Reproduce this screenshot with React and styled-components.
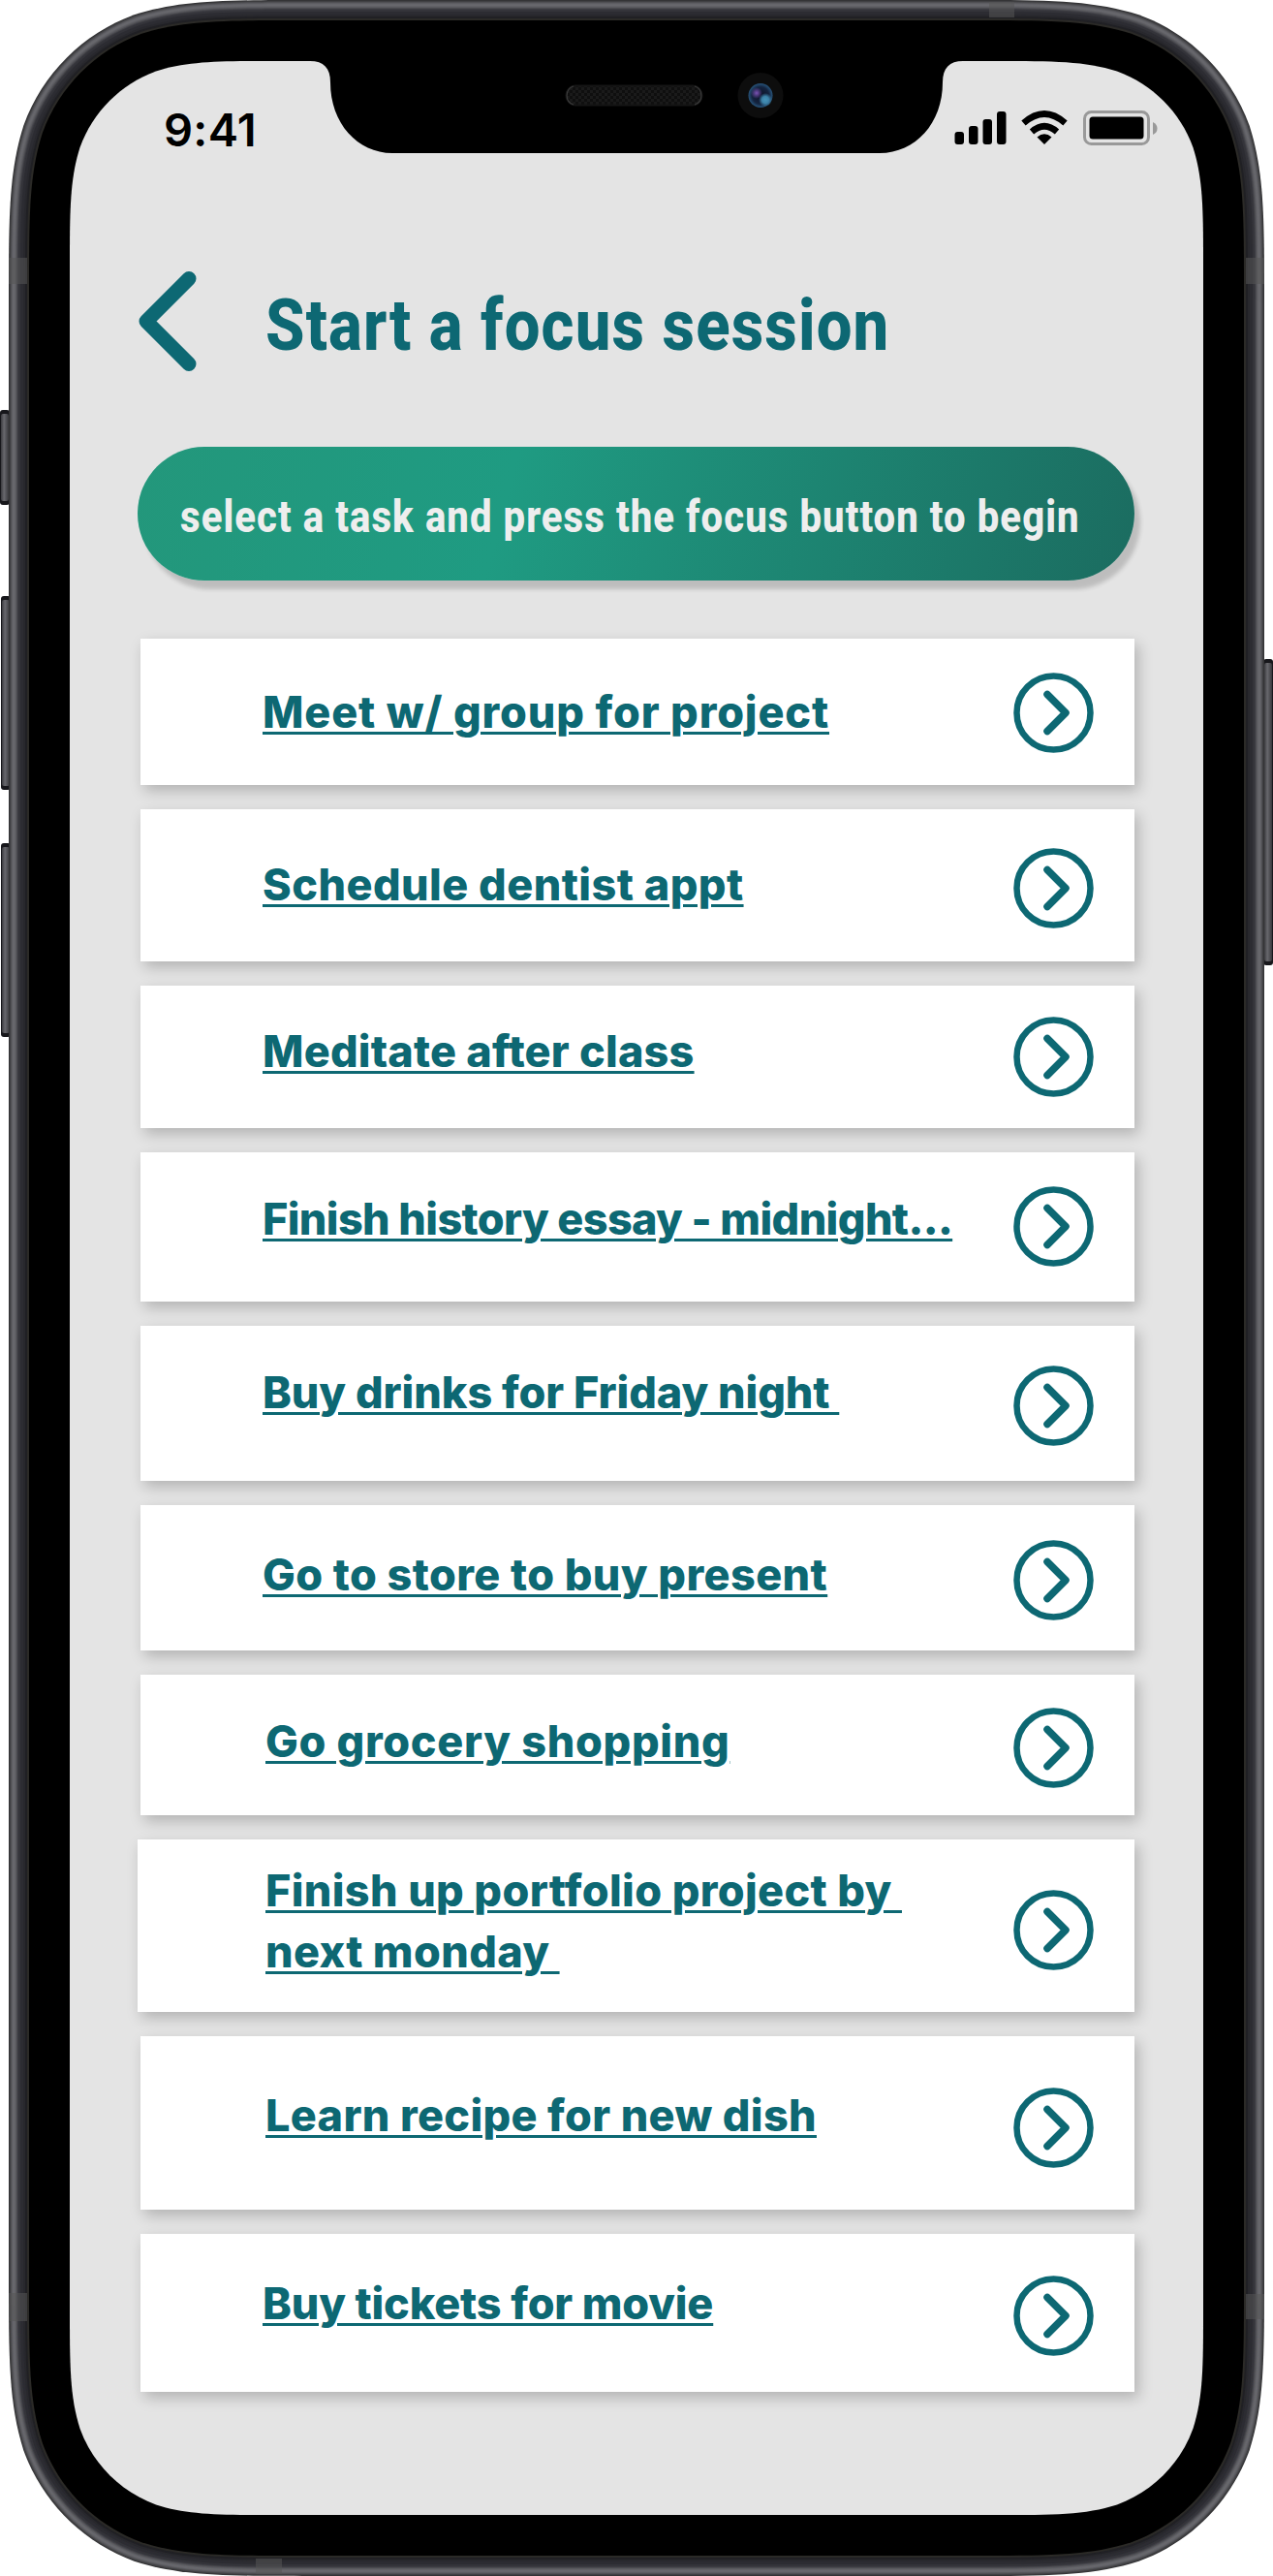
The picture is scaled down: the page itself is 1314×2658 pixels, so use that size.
import React from 'react';
import styled, { createGlobalStyle } from 'styled-components';

const GlobalStyle = createGlobalStyle`
  * {
    box-sizing: border-box;
  }

  body {
    margin: 0;
    background: #fff;
  }
`;

const Phone = styled.div`
  position: relative;
  width: 1314px;
  height: 2658px;
  overflow: hidden;
`;

const Shell = styled.svg`
  position: absolute;
  top: 0;
  left: 0;
`;

const Screen = styled.div`
  position: relative;
  margin: 0 72px;
  padding-top: 63px;
  color: #0d6873;
`;

const StatusBar = styled.div`
  display: flex;
  justify-content: space-between;
  height: 217px;
  padding: 47px 46px 0 97px;
`;

const Time = styled.span`
  font: 600 47px/48px Inter, sans-serif;
  letter-spacing: 0.3px;
  color: #000;
`;

const StatusIcons = styled.svg`
  margin-top: 2px;
`;

const Header = styled.header`
  display: flex;
  align-items: center;
  height: 104px;
  padding-left: 71px;
`;

const Title = styled.h1`
  margin: 6px 0 0 71px;
  font: 800 75px/1 Roboto, sans-serif;
  letter-spacing: 1.3px;
  white-space: nowrap;
  transform: scaleX(0.87);
  transform-origin: left;
`;

const Banner = styled.div`
  display: flex;
  align-items: center;
  width: 1029px;
  height: 138px;
  margin: 77px 0 60px 70px;
  padding: 5px 0 0 44px;
  border-radius: 69px;
  background: linear-gradient(105deg, #23977b 0%, #1f9b82 37%, #1b6c60 100%);
  box-shadow: 6px 9px 4px rgba(0, 0, 0, 0.17);
`;

const BannerText = styled.p`
  margin: 0;
  font: 800 46px/1 Roboto, sans-serif;
  letter-spacing: 1.25px;
  white-space: nowrap;
  color: #eee;
  transform: scaleX(0.87);
  transform-origin: left;
`;

const TaskList = styled.ul`
  display: flex;
  flex-direction: column;
  gap: 25px;
  margin: 0;
  padding: 0 71px 0 73px;
  list-style: none;
`;

const Task = styled.li`
  display: flex;
  justify-content: space-between;
  height: ${({ $height }) => $height}px;
  margin-left: ${({ $wide }) => ($wide ? -3 : 0)}px;
  padding: 0 42px 0 ${({ $indent }) => $indent}px;
  background: #fff;
  box-shadow: 4px 6px 14px rgba(0, 0, 0, 0.22);
`;

const TaskLink = styled.a`
  margin-top: ${({ $top }) => $top}px;
  font: 800 45px/63px Inter, sans-serif;
  letter-spacing: ${({ $tracking }) => $tracking}px;
  white-space: pre;
  text-decoration: underline 3px;
  text-underline-offset: 4px;
`;

const GoIcon = styled.svg`
  flex: none;
  margin-top: ${({ $top }) => $top}px;
`;

const tasks = [
  { label: 'Meet w/ group for project', height: 150.5, textTop: 43.5, iconTop: 35, tracking: 0.85 },
  { label: 'Schedule dentist appt', height: 157.3, textTop: 46.5, iconTop: 40, tracking: 0.45 },
  { label: 'Meditate after class', height: 147.2, textTop: 36.5, iconTop: 32, tracking: 0.2 },
  { label: 'Finish history essay - midnight...', height: 154, textTop: 37, iconTop: 35.5, tracking: -0.62 },
  { label: 'Buy drinks for Friday night ', height: 160, textTop: 36.6, iconTop: 41.2, tracking: -0.06 },
  { label: 'Go to store to buy present', height: 150, textTop: 39.6, iconTop: 36.5, tracking: 0.42 },
  { label: 'Go grocery shopping', height: 145, textTop: 37, iconTop: 34.2, indent: 129, tracking: 0.67 },
  {
    label: 'Finish up portfolio project by \nnext monday ',
    height: 178.5,
    textTop: 21,
    iconTop: 52.2,
    indent: 132,
    tracking: 0.36,
    wide: true,
  },
  { label: 'Learn recipe for new dish', height: 178.5, textTop: 49.6, iconTop: 52.4, indent: 129, tracking: 0.34 },
  { label: 'Buy tickets for movie', height: 163.4, textTop: 40.4, iconTop: 43.5, tracking: -0.16 },
];

// Path of a rounded rectangle with continuous-curvature corners
const roundedPath = (x, y, w, h, r) => {
  const corners = [
    [x, y, 0, 1, 1, 0],
    [x + w, y, -1, 0, 0, 1],
    [x + w, y + h, 0, -1, -1, 0],
    [x, y + h, 1, 0, 0, -1],
  ];
  const parts = corners.map(([cx, cy, ax, ay, bx, by], i) => {
    const p = (a, b) => `${(cx + (a * ax + b * bx) * r).toFixed(2)} ${(cy + (a * ay + b * by) * r).toFixed(2)}`;
    return `${i ? 'L' : 'M'}${p(1.5287, 0)}
      C${p(1.0885, 0)} ${p(0.8684, 0)} ${p(0.6315, 0.0749)}
      C${p(0.3728, 0.1691)} ${p(0.1691, 0.3728)} ${p(0.0749, 0.6315)}
      C${p(0, 0.8684)} ${p(0, 1.0885)} ${p(0, 1.5287)}`;
  });
  return `${parts.join(' ')}Z`;
};

// Metal edge, from the outside in
const edge = [
  [0, '#343436'],
  [1, '#404043'],
  [2, '#505054'],
  [3, '#5d5d62'],
  [4, '#66666b'],
  [5, '#68686d'],
  [6, '#626267'],
  [7, '#59595e'],
  [8, '#4b4b50'],
  [9, '#3d3d43'],
  [10, '#34343a'],
  [12, '#2c2c32'],
  [15, '#28282d'],
  [17, '#202024'],
  [19, '#2b2a27'],
  [21, '#000'],
];

const sideButtons = [
  [0, 423, 98],
  [1, 615, 200],
  [1, 870, 200],
  [1304, 680, 316],
];

const PhoneShell = () => (
  <Shell width="1314" height="2658" viewBox="0 0 1314 2658">
    <defs>
      <linearGradient id="button">
        <stop offset="0" stopColor="#3b3b3f" />
        <stop offset="0.4" stopColor="#68686d" />
        <stop offset="1" stopColor="#38383c" />
      </linearGradient>
      <pattern id="mesh" width="6" height="6" patternUnits="userSpaceOnUse">
        <rect width="6" height="6" fill="#0f0f0f" />
        <path d="M0 0h3v3H0zM3 3h3v3H3z" fill="#1a1a1a" />
      </pattern>
      <radialGradient id="lens">
        <stop offset="0" stopColor="#0b1026" />
        <stop offset="0.7" stopColor="#14243f" />
        <stop offset="1" stopColor="#28557c" />
      </radialGradient>
      <radialGradient id="violet">
        <stop offset="0" stopColor="#7a52b4" />
        <stop offset="1" stopColor="#7a52b4" stopOpacity="0" />
      </radialGradient>
      <radialGradient id="cyan">
        <stop offset="0" stopColor="#4592b8" />
        <stop offset="0.5" stopColor="#3c82a8" />
        <stop offset="1" stopColor="#3c82a8" stopOpacity="0" />
      </radialGradient>
    </defs>
    {sideButtons.map(([x, y, height]) => (
      <g key={y}>
        <rect x={x} y={y} width="10" height={height} rx="3" fill="#17171b" />
        <rect x={x + 1} y={y + 4} width="8" height={height - 8} rx="2" fill="url(#button)" />
      </g>
    ))}
    {edge.map(([inset, fill]) => (
      <path
        key={inset}
        d={roundedPath(9 + inset, inset, 1296 - inset * 2, 2658 - inset * 2, 205 - inset)}
        fill={fill}
      />
    ))}
    <g fill="#555" opacity="0.55">
      <path d="M9 266h19v27H9zM1286 266h19v27h-19zM9 2366h19v29H9zM1286 2367h19v26h-19z" />
      <path d="M1021 2h26v16h-26zM264 2640h27v16h-27z" />
    </g>
    <path d={roundedPath(72, 63, 1170, 2532, 141)} fill="#e4e4e4" />
    <path
      d="M320 60V63C334 63 341 70 341 85C341 127 369 158 405 158H908C945 158 973 127 973 85C973 70 980 63 994 63V60Z"
      fill="#000"
    />
    <rect x="584.5" y="88.5" width="140" height="20" rx="10" fill="url(#mesh)" stroke="#151515" strokeWidth="2" />
    <path d="M592 89a10 10 0 0 0 0 19M717 89a10 10 0 0 1 0 19" fill="none" stroke="#3a3a3a" strokeWidth="1.2" />
    <circle cx="785" cy="98.5" r="23.5" fill="#0d0d0d" />
    <circle cx="785" cy="98.5" r="12.5" fill="url(#lens)" />
    <circle cx="781" cy="96" r="6" fill="url(#violet)" />
    <circle cx="790" cy="103" r="7" fill="url(#cyan)" />
  </Shell>
);

const StatusGlyphs = () => (
  <StatusIcons width="211" height="38" viewBox="0 0 211 38">
    <rect x="0.5" y="24" width="9.5" height="13" rx="3" />
    <rect x="15" y="18" width="9.5" height="19" rx="3" />
    <rect x="29.5" y="11" width="9.5" height="26" rx="3" />
    <rect x="44" y="3" width="9.5" height="34" rx="3" />
    <g fill="none" stroke="#000" strokeWidth="6.5">
      <path d="M71.5 15Q93 -4 114.5 15" />
      <path d="M80 24Q93 12.5 106 24" />
    </g>
    <path d="M85.5 29.5Q93 23 100.5 29.5L93 37Z" />
    <rect x="134.5" y="3.5" width="66" height="33" rx="7" fill="none" stroke="#999" strokeWidth="3" />
    <rect x="139.5" y="8.5" width="56" height="23" rx="3.5" />
    <path d="M205 14q4.5 2 4.5 6.5t-4.5 6.5z" fill="#999" />
  </StatusIcons>
);

const TaskRow = ({ label, height, textTop, iconTop, indent = 126, tracking, wide }) => (
  <Task $height={height} $indent={indent} $wide={wide}>
    <TaskLink $top={textTop} $tracking={tracking}>
      {label}
    </TaskLink>
    <GoIcon $top={iconTop} width="83" height="83" viewBox="0 0 83 83" fill="none" stroke="#0d6873">
      <circle cx="41.5" cy="41.5" r="38" strokeWidth="6.5" />
      <path d="M35 22.5L54 41.5L35 60.5" strokeWidth="7.5" strokeLinecap="round" strokeLinejoin="round" />
    </GoIcon>
  </Task>
);

const App = () => (
  <Phone>
    <GlobalStyle />
    <PhoneShell />
    <Screen>
      <StatusBar>
        <Time>9:41</Time>
        <StatusGlyphs />
      </StatusBar>
      <Header>
        <svg width="60" height="104" viewBox="0 0 60 104" fill="none" stroke="#0d6873">
          <path d="M52 7.5L8 51.5L52 95.5" strokeWidth="15" strokeLinecap="round" strokeLinejoin="round" />
        </svg>
        <Title>Start a focus session</Title>
      </Header>
      <Banner>
        <BannerText>select a task and press the focus button to begin</BannerText>
      </Banner>
      <TaskList>
        {tasks.map((task) => (
          <TaskRow key={task.label} {...task} />
        ))}
      </TaskList>
    </Screen>
  </Phone>
);

export default App;
